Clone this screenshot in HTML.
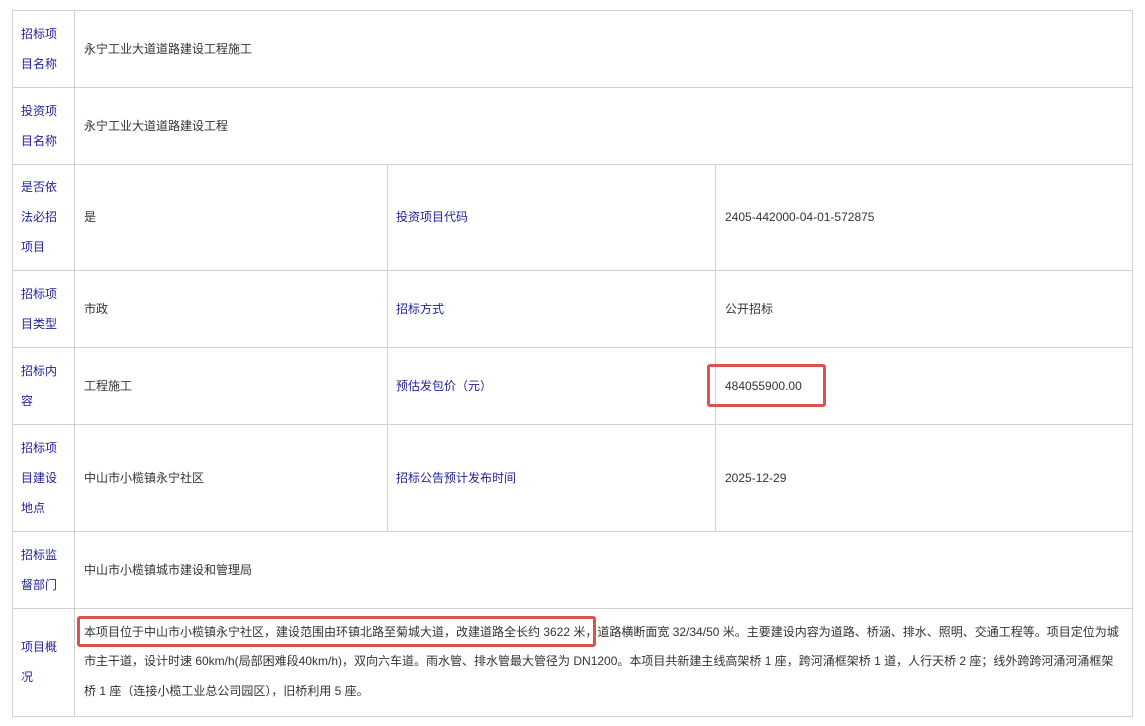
<!DOCTYPE html>
<html><head><meta charset="utf-8"><style>
body{margin:0;background:#fff;width:1145px;height:726px;position:relative;overflow:hidden;font-family:"Liberation Sans","Noto Sans CJK SC",sans-serif;font-size:12px;color:#333}
.c{position:absolute;border-right:1px solid #d0d0d0;border-bottom:1px solid #d0d0d0;box-sizing:border-box;display:flex;align-items:center;line-height:30px}
.l{color:#1f1f99;padding-left:9px;padding-right:6px}
.v{padding-left:10px}
.b{color:#1f1f99;padding-left:9px}
.r{position:absolute;border:3px solid #d9534f;border-radius:3px;box-sizing:border-box}
</style></head><body>
<div style="position:absolute;left:12px;top:10px;width:1121px;height:707px;border-left:1px solid #d0d0d0;border-top:1px solid #d0d0d0;box-sizing:border-box"></div>
<!-- row1 -->
<div class="c l" style="left:12px;top:10px;width:63px;height:78px">招标项<br>目名称</div>
<div class="c v" style="left:74px;top:10px;width:1059px;height:78px">永宁工业大道道路建设工程施工</div>
<div class="c l" style="left:12px;top:87px;width:63px;height:78px">投资项<br>目名称</div>
<div class="c v" style="left:74px;top:87px;width:1059px;height:78px">永宁工业大道道路建设工程</div>
<div class="c l" style="left:12px;top:164px;width:63px;height:107px">是否依<br>法必招<br>项目</div>
<div class="c v" style="left:74px;top:164px;width:314px;height:107px">是</div>
<div class="c b" style="left:387px;top:164px;width:329px;height:107px">投资项目代码</div>
<div class="c v" style="left:715px;top:164px;width:418px;height:107px">2405-442000-04-01-572875</div>
<div class="c l" style="left:12px;top:270px;width:63px;height:78px">招标项<br>目类型</div>
<div class="c v" style="left:74px;top:270px;width:314px;height:78px">市政</div>
<div class="c b" style="left:387px;top:270px;width:329px;height:78px">招标方式</div>
<div class="c v" style="left:715px;top:270px;width:418px;height:78px">公开招标</div>
<div class="c l" style="left:12px;top:347px;width:63px;height:78px">招标内<br>容</div>
<div class="c v" style="left:74px;top:347px;width:314px;height:78px">工程施工</div>
<div class="c b" style="left:387px;top:347px;width:329px;height:78px">预估发包价（元）</div>
<div class="c v" style="left:715px;top:347px;width:418px;height:78px">484055900.00</div>
<div class="c l" style="left:12px;top:424px;width:63px;height:108px">招标项<br>目建设<br>地点</div>
<div class="c v" style="left:74px;top:424px;width:314px;height:108px">中山市小榄镇永宁社区</div>
<div class="c b" style="left:387px;top:424px;width:329px;height:108px">招标公告预计发布时间</div>
<div class="c v" style="left:715px;top:424px;width:418px;height:108px">2025-12-29</div>
<div class="c l" style="left:12px;top:531px;width:63px;height:78px">招标监<br>督部门</div>
<div class="c v" style="left:74px;top:531px;width:1059px;height:78px">中山市小榄镇城市建设和管理局</div>
<div class="c l" style="left:12px;top:608px;width:63px;height:109px">项目概<br>况</div>
<div class="c v" style="left:74px;top:608px;width:1059px;height:109px;line-height:29.5px;padding-right:8px">本项目位于中山市小榄镇永宁社区，建设范围由环镇北路至菊城大道，改建道路全长约 3622 米，道路横断面宽 32/34/50 米。主要建设内容为道路、桥涵、排水、照明、交通工程等。项目定位为城市主干道，设计时速 60km/h(局部困难段40km/h)，双向六车道。雨水管、排水管最大管径为 DN1200。本项目共新建主线高架桥 1 座，跨河涌框架桥 1 道，人行天桥 2 座；线外跨跨河涌河涌框架桥 1 座（连接小榄工业总公司园区），旧桥利用 5 座。</div>
<div class="r" style="left:707px;top:364px;width:119px;height:43px"></div>
<div class="r" style="left:77px;top:616px;width:519px;height:31px"></div>
</body></html>
